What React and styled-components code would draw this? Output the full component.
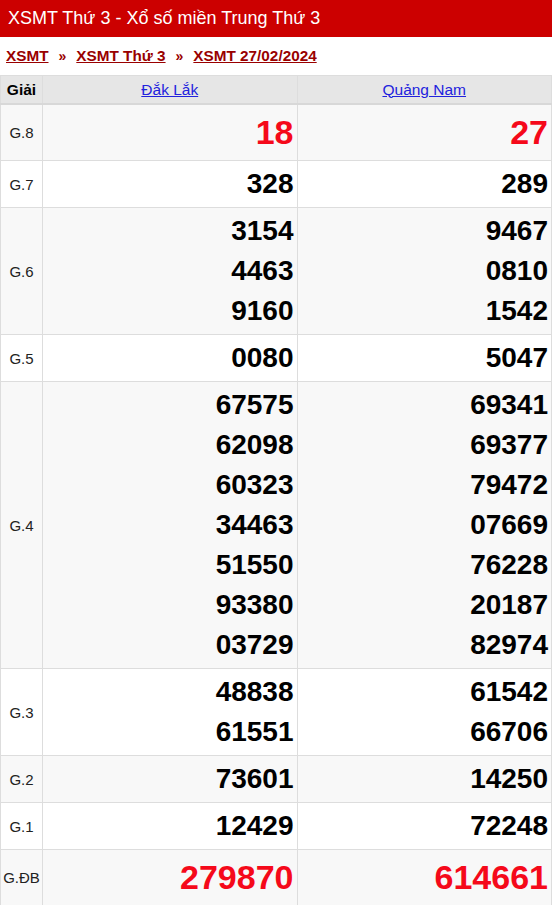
import React from 'react';
import styled, { createGlobalStyle } from 'styled-components';

// Page-wide reset
const GlobalStyle = createGlobalStyle`
  body {
    margin: 0;
    font-family: "Liberation Sans", Arial, sans-serif;
    background: #fff;
  }
`;

const TitleBar = styled.h1`
  margin: 0;
  height: 37px;
  padding: 0 8px;
  display: flex;
  align-items: center;
  background: #cc0000;
  color: #fff;
  font-size: 18px;
  font-weight: normal;
`;

const Crumbs = styled.div`
  display: flex;
  align-items: center;
  gap: 10px;
  height: 38px;
  padding: 0 6px;
  font-size: 15.3px;
  font-weight: bold;
`;

const Crumb = styled.a`
  color: #990000;
  text-decoration: underline;
`;

const Sep = styled.span`
  color: #990000;
  font-size: 14px;
`;

const Table = styled.table`
  width: 100%;
  border-collapse: collapse;
  table-layout: fixed;
  border: 1px solid #ddd;
`;

const HeadCell = styled.th`
  background: #e6e6e6;
  border: 1px solid #ddd;
  border-bottom: 2px solid #d8d8d8;
  height: 27px;
  padding: 0;
  font-size: 15.5px;
  font-weight: ${(p) => (p.$plain ? 'bold' : 'normal')};
  color: #000;
`;

const HeadLink = styled.a`
  color: #2222dd;
  text-decoration: underline;
`;

const Row = styled.tr`
  background: ${(p) => (p.$shade ? '#f8f8f8' : '#fff')};
`;

const Label = styled.td`
  border: 1px solid #ddd;
  padding: 0;
  text-align: center;
  font-size: 15px;
  color: #222;
`;

const NumCell = styled.td`
  border: 1px solid #ddd;
  padding: 3px 3px 3px 4px;
  text-align: right;
  vertical-align: middle;
`;

const Num = styled.div`
  font-size: ${(p) => (p.$big ? '34px' : '28px')};
  line-height: ${(p) => (p.$big ? '49px' : '40px')};
  font-weight: bold;
  color: ${(p) => (p.$red ? '#f5091a' : '#000')};
`;

const rows = [
  { label: 'G.8', a: ['18'], b: ['27'], big: true, red: true },
  { label: 'G.7', a: ['328'], b: ['289'] },
  { label: 'G.6', a: ['3154', '4463', '9160'], b: ['9467', '0810', '1542'] },
  { label: 'G.5', a: ['0080'], b: ['5047'] },
  {
    label: 'G.4',
    a: ['67575', '62098', '60323', '34463', '51550', '93380', '03729'],
    b: ['69341', '69377', '79472', '07669', '76228', '20187', '82974'],
  },
  { label: 'G.3', a: ['48838', '61551'], b: ['61542', '66706'] },
  { label: 'G.2', a: ['73601'], b: ['14250'] },
  { label: 'G.1', a: ['12429'], b: ['72248'] },
  { label: 'G.ĐB', a: ['279870'], b: ['614661'], big: true, red: true },
];

const App = () => {
  return (
    <>
      <GlobalStyle />
      <TitleBar>XSMT Thứ 3 - Xổ số miền Trung Thứ 3</TitleBar>
      <Crumbs>
        <Crumb href="#">XSMT</Crumb>
        <Sep>»</Sep>
        <Crumb href="#">XSMT Thứ 3</Crumb>
        <Sep>»</Sep>
        <Crumb href="#">XSMT 27/02/2024</Crumb>
      </Crumbs>
      <Table>
        <colgroup>
          <col style={{ width: 42 }} />
          <col />
          <col />
        </colgroup>
        <thead>
          <tr>
            <HeadCell $plain>Giải</HeadCell>
            <HeadCell>
              <HeadLink href="#">Đắk Lắk</HeadLink>
            </HeadCell>
            <HeadCell>
              <HeadLink href="#">Quảng Nam</HeadLink>
            </HeadCell>
          </tr>
        </thead>
        <tbody>
          {rows.map((r, i) => (
            <Row key={r.label} $shade={i % 2 === 0}>
              <Label>{r.label}</Label>
              <NumCell>
                {r.a.map((n) => (
                  <Num key={n} $big={r.big} $red={r.red}>{n}</Num>
                ))}
              </NumCell>
              <NumCell>
                {r.b.map((n) => (
                  <Num key={n} $big={r.big} $red={r.red}>{n}</Num>
                ))}
              </NumCell>
            </Row>
          ))}
        </tbody>
      </Table>
    </>
  );
};

export default App;
